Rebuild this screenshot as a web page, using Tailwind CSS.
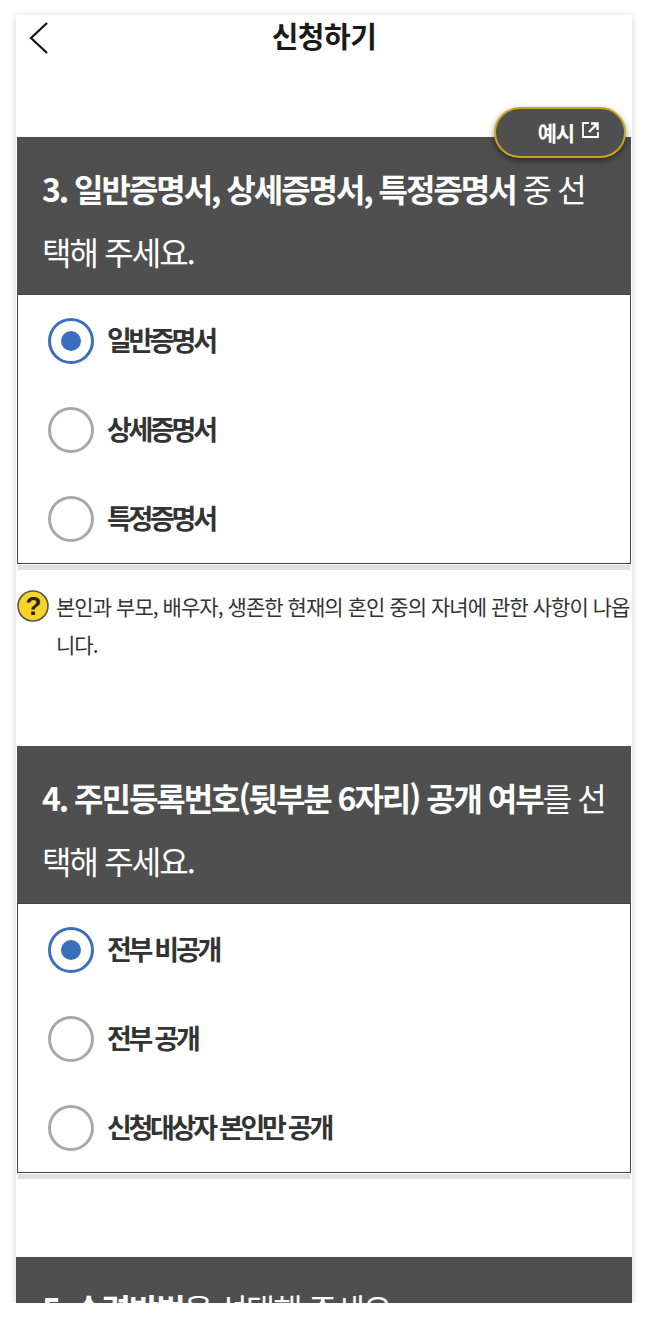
<!DOCTYPE html>
<html lang="ko">
<head>
  <meta charset="UTF-8">
  <title>신청하기</title>
  <script src="https://cdn.jsdelivr.net/npm/@tailwindcss/browser@4"></script>
</head>
<body class="bg-white font-['Noto_Sans_CJK_KR','Noto_Sans',sans-serif]">

  <div class="mx-[16px] mt-[15px] h-[1288px] w-[616px] overflow-hidden bg-white shadow-[0_2px_8px_rgba(0,0,0,0.18)]">

    <!-- Header -->
    <header class="relative h-[44px] flex items-center justify-center">
      <svg class="absolute left-[13px] top-[7px]" width="20" height="32" viewBox="0 0 20 32" fill="none" stroke="#111" stroke-width="2.2">
        <path d="M18 1 L2 16 L18 31"/>
      </svg>
      <h1 class="mb-[2px] text-[29px] font-bold tracking-[-0.5px] text-[#1a1a1a]">신청하기</h1>
    </header>

    <!-- 3 -->
    <section class="relative mt-[78px]">
      <button class="absolute right-[6px] top-[-30px] z-10 w-[132px] h-[51px] rounded-full border-2 border-[#c9a520] bg-[#4f4f4f] shadow-[0_3px_6px_rgba(0,0,0,0.45)] flex items-center justify-end pr-[24px] gap-[7px] text-white">
        <span class="text-[21px] font-bold tracking-[-1.2px]">예시</span>
        <svg class="mb-[5px]" width="19" height="18" viewBox="0 0 19 18" fill="none" stroke="#fff" stroke-width="1.8">
          <path d="M8 2 H2 V16 H17 V11"/>
          <path d="M8 11 L15 4 M10 2.5 H16.5 V9" stroke-width="2.4"/>
        </svg>
      </button>
      <div class="mx-[1px] bg-[#4f4f4f] h-[157px] pl-[25px] pr-[24px] pt-[20px] text-[32px] leading-[63px] tracking-[-1.9px] text-white">
        <b class="font-bold tracking-[-2.05px]">3. 일반증명서, 상세증명서, 특정증명서</b> 중 선택해 주세요.
      </div>
      <div class="mx-[1px] h-[270px] border border-[#444] pl-[30px] pt-[1px] flex flex-col">
        <label class="h-[89px] flex items-center gap-[13px]">
          <span class="w-[46px] h-[46px] rounded-full border-[3.5px] border-[#3b6fbd] flex items-center justify-center"><span class="w-[20px] h-[20px] rounded-full bg-[#3b6fbd]"></span></span>
          <span class="text-[27px] font-bold tracking-[-3.3px] text-[#333]">일반증명서</span>
        </label>
        <label class="h-[89px] flex items-center gap-[13px]">
          <span class="w-[46px] h-[46px] rounded-full border-[3.5px] border-[#a8a8a8]"></span>
          <span class="text-[27px] font-bold tracking-[-3.3px] text-[#333]">상세증명서</span>
        </label>
        <label class="h-[89px] flex items-center gap-[13px]">
          <span class="w-[46px] h-[46px] rounded-full border-[3.5px] border-[#a8a8a8]"></span>
          <span class="text-[27px] font-bold tracking-[-3.3px] text-[#333]">특정증명서</span>
        </label>
      </div>
      <div class="mx-[2px] mt-[1px] h-[5px] bg-[#e0e0e0]"></div>
    </section>

    <!-- Note -->
    <div class="relative mt-[17px] h-[159px] pl-[40px] text-[21px] leading-[38px] tracking-[-0.95px] text-[#333] break-all">
      <svg class="absolute left-[1px] top-[3px]" width="32" height="32" viewBox="0 0 32 32">
        <circle cx="16" cy="16" r="15" fill="#fbd324" stroke="#555" stroke-width="1.6"/>
        <text x="16" y="25" text-anchor="middle" font-size="26" font-weight="700" font-family="Liberation Sans" fill="#222">?</text>
      </svg>
      본인과 부모, 배우자, 생존한 현재의 혼인 중의 자녀에 관한 사항이 나옵니다.
    </div>

    <!-- 4 -->
    <section>
      <div class="mx-[1px] bg-[#4f4f4f] h-[157px] pl-[25px] pr-[24px] pt-[20px] text-[32px] leading-[63px] tracking-[-1.9px] text-white">
        <b class="font-bold tracking-[-2.05px]">4. 주민등록번호(뒷부분 6자리) 공개 여부</b>를 선택해 주세요.
      </div>
      <div class="mx-[1px] h-[270px] border border-[#444] pl-[30px] pt-[1px] flex flex-col">
        <label class="h-[89px] flex items-center gap-[13px]">
          <span class="w-[46px] h-[46px] rounded-full border-[3.5px] border-[#3b6fbd] flex items-center justify-center"><span class="w-[20px] h-[20px] rounded-full bg-[#3b6fbd]"></span></span>
          <span class="text-[27px] font-bold tracking-[-3.3px] text-[#333]">전부 비공개</span>
        </label>
        <label class="h-[89px] flex items-center gap-[13px]">
          <span class="w-[46px] h-[46px] rounded-full border-[3.5px] border-[#a8a8a8]"></span>
          <span class="text-[27px] font-bold tracking-[-3.3px] text-[#333]">전부 공개</span>
        </label>
        <label class="h-[89px] flex items-center gap-[13px]">
          <span class="w-[46px] h-[46px] rounded-full border-[3.5px] border-[#a8a8a8]"></span>
          <span class="text-[27px] font-bold tracking-[-3.3px] text-[#333]">신청대상자 본인만 공개</span>
        </label>
      </div>
      <div class="mx-[2px] mt-[1px] h-[5px] bg-[#e0e0e0]"></div>
    </section>

    <!-- 5 -->
    <section class="mt-[78px]">
      <div class="bg-[#4f4f4f] h-[157px] pl-[26px] pr-[24px] pt-[20px] text-[32px] leading-[63px] tracking-[-1.9px] text-white">
        <b class="font-bold tracking-[-2.05px]">5. 수령방법</b>을 선택해 주세요.
      </div>
    </section>
  </div>

</body>
</html>
